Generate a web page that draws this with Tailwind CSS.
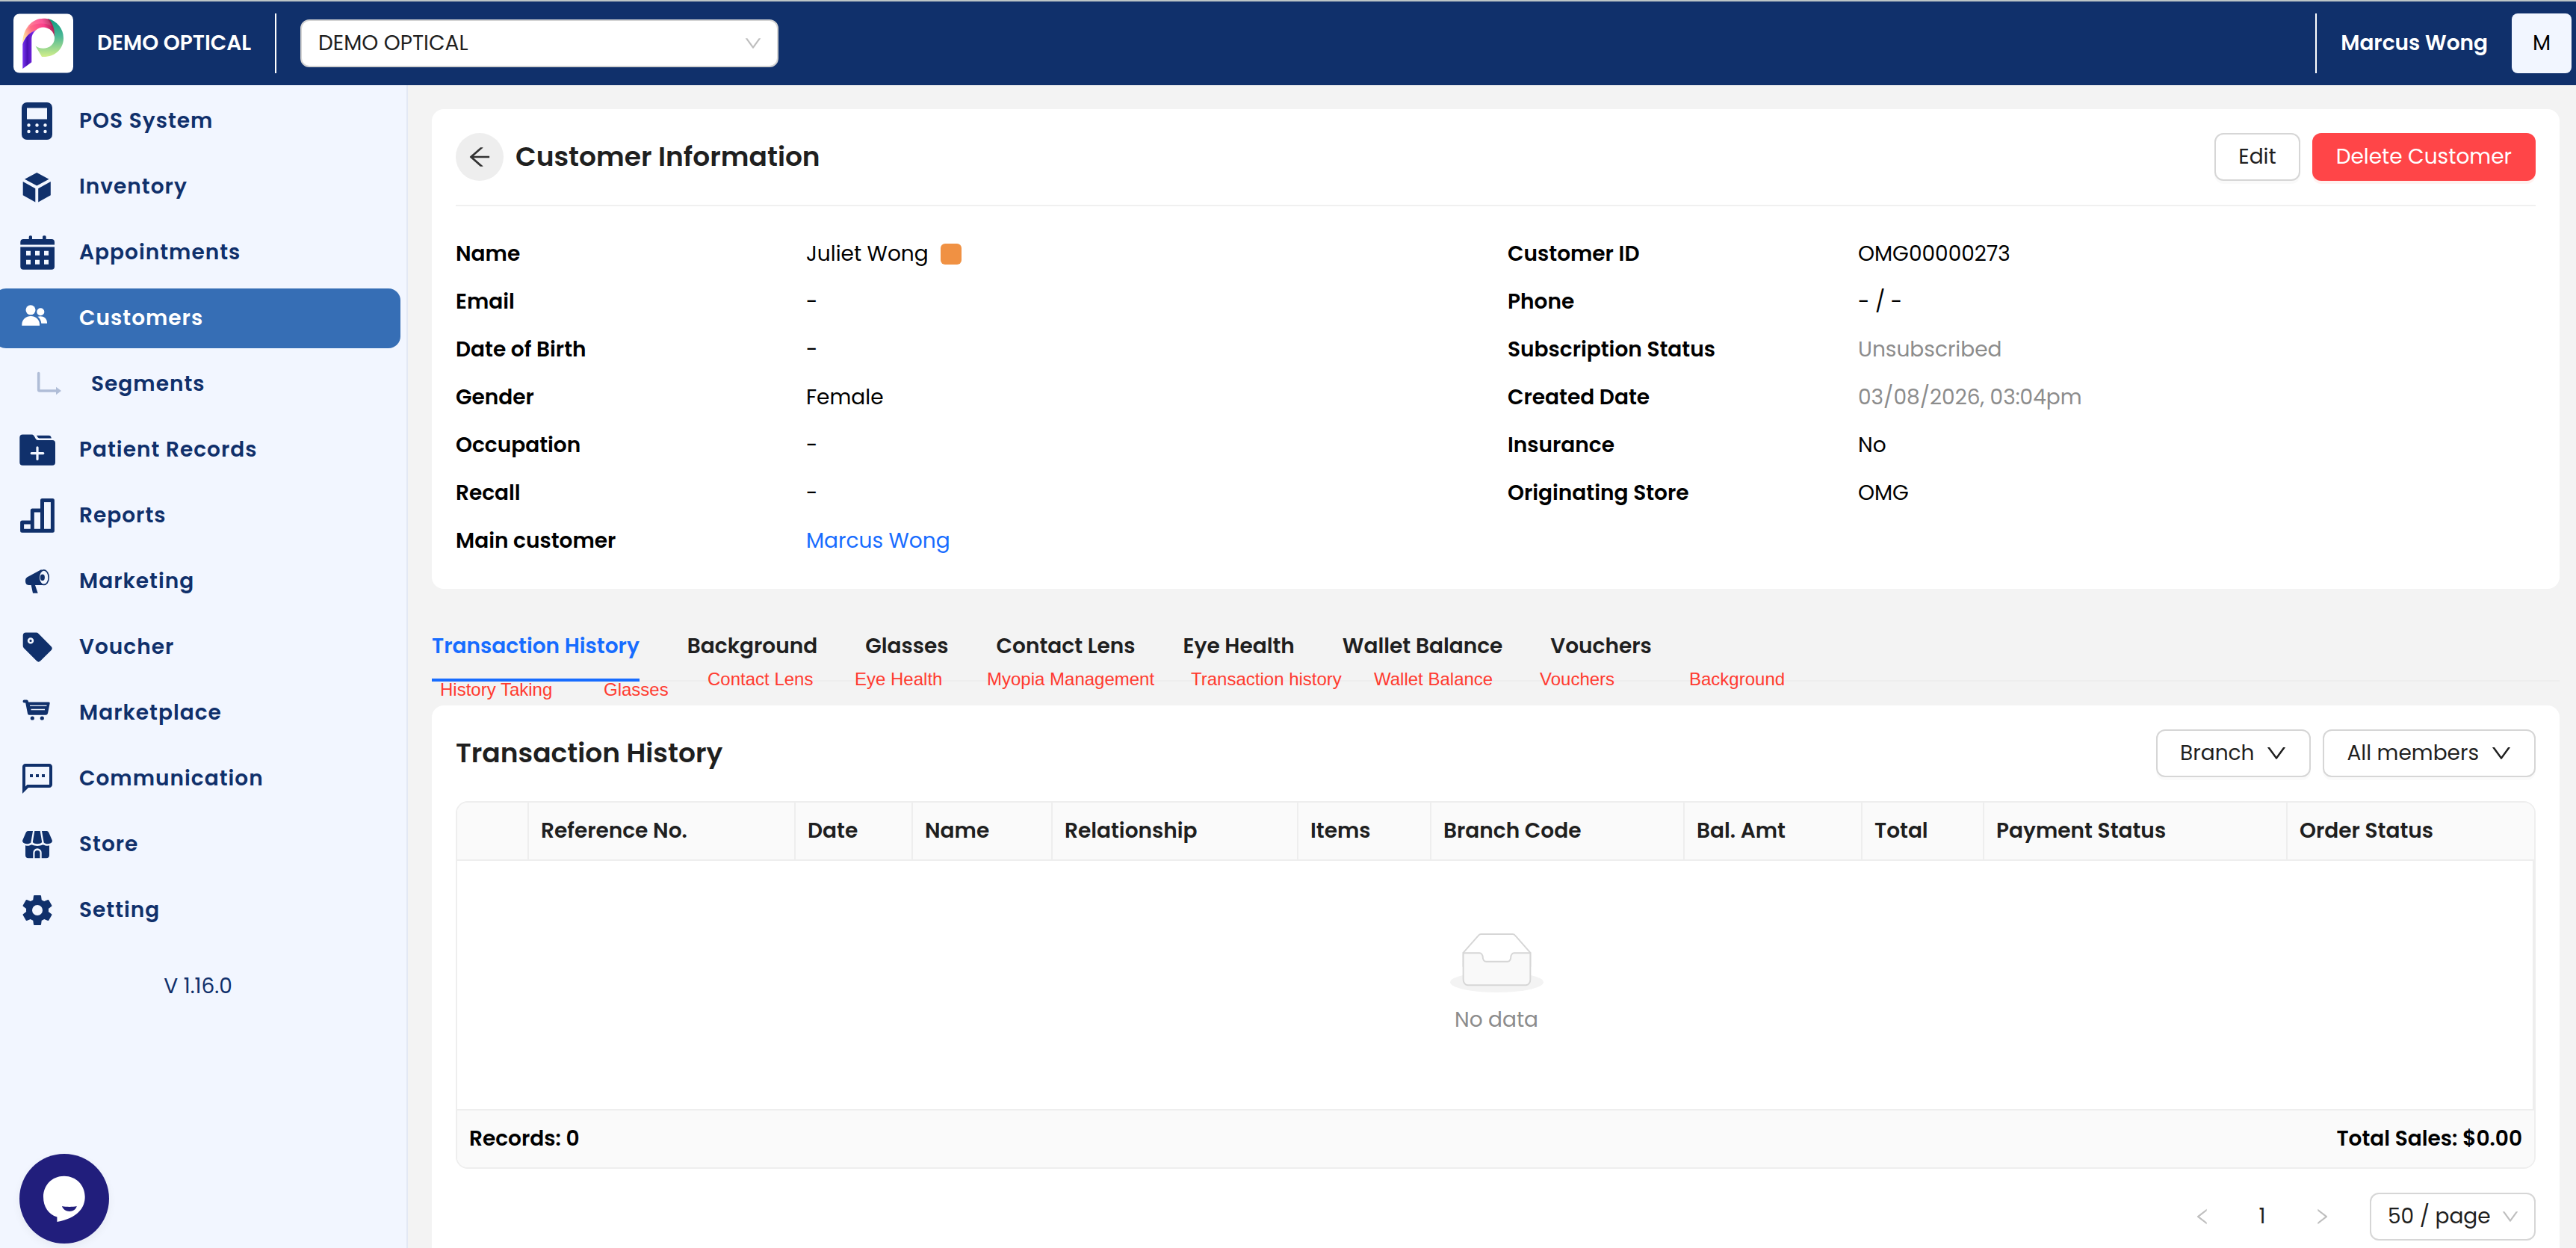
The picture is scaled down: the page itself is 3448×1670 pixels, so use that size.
<!DOCTYPE html>
<html lang="en">
<head>
<meta charset="utf-8">
<title>Customer Information</title>
<script src="https://cdn.jsdelivr.net/npm/@tailwindcss/browser@4"></script>
</head>
<body class="h-[1670px] w-[3448px] overflow-hidden bg-[#f3f3f3] font-[Poppins,Inter,sans-serif] text-[28px] leading-[44px] text-black">

<svg class="hidden">
  <symbol id="down" viewBox="64 64 896 896"><path d="M884 256h-75c-5.1 0-9.9 2.5-12.9 6.6L512 654.2 227.9 262.6c-3-4.1-7.8-6.6-12.9-6.6h-75c-6.5 0-10.3 7.4-6.5 12.7l352.6 486.1c12.8 17.6 39 17.6 51.7 0l352.6-486.1c3.9-5.3.1-12.7-6.4-12.7z"/></symbol>
</svg>

<!-- Top bar -->
<header class="flex h-[114px] items-center border-t-2 border-[#bcc5c6] bg-[#10306b] pr-1.5 pl-[18px]">
  <svg class="h-20 w-20" viewBox="0 0 80 80">
    <defs>
      <linearGradient id="lg1" x1="0" y1="0" x2="0" y2="1"><stop offset="0" stop-color="#0d9a80"/><stop offset=".45" stop-color="#4bb795"/><stop offset="1" stop-color="#d3ef8b"/></linearGradient>
      <linearGradient id="lg2" x1="0" y1=".6" x2="1" y2=".3"><stop offset="0" stop-color="#ffe09a"/><stop offset=".3" stop-color="#ff6a86"/><stop offset=".7" stop-color="#fb3f8c"/><stop offset="1" stop-color="#9c1848"/></linearGradient>
      <linearGradient id="lg3" x1="0" y1="0" x2="1" y2="0"><stop offset="0" stop-color="#7a35f0"/><stop offset=".35" stop-color="#4a10b4"/><stop offset="1" stop-color="#8f35ff"/></linearGradient>
    </defs>
    <rect width="80" height="79" y=".5" rx="8" fill="#fff"/>
    <path d="M46 7A27 27 0 0 1 67 33C67 48 55 59 38 58L29.500 43.500C40 51 55 45 55 33C55 24 51 15 46 7z" fill="url(#lg1)"/>
    <path d="M12.300 41C12 20 25 6.700 40 6.700C43 6.700 46 7 48 8C53 14 55.500 22 54.800 31A15 15 0 0 0 30 22.500C20 27 14 33 12.300 41z" fill="url(#lg2)"/>
    <path d="M13 26C20 14 38 10 51 17C48 10 46 8 44 7C30 4 17 14 13 26z" fill="#fff" opacity=".12"/>
    <path d="M12.300 41C15 32 22 25 30 22.500C26 26 24.300 30 24.300 34V65.300L12.300 74z" fill="url(#lg3)"/>
  </svg>
  <span class="ml-8 w-[206px] font-semibold whitespace-nowrap text-white">DEMO OPTICAL</span>
  <div class="ml-8 h-20 w-0.5 bg-white"></div>
  <div class="ml-8 flex h-16 w-[640px] items-center justify-between rounded-xl border-2 border-[#d3d3d3] bg-white pr-[20px] pl-[22px] text-[#1f1f1f]">
    DEMO OPTICAL
    <svg class="h-6 w-6 fill-[#bfbfbf]"><use href="#down"/></svg>
  </div>
  <div class="ml-auto h-20 w-0.5 bg-white"></div>
  <span class="ml-8 font-semibold text-white">Marcus Wong</span>
  <div class="ml-8 flex h-20 w-20 items-center justify-center rounded-lg bg-[#f2f6ff]">M</div>
</header>

<div class="flex h-[1556px]">
  <!-- Sidebar -->
  <aside class="relative w-[546px] shrink-0 border-r-2 border-[#e3e8f4] bg-[#f2f6ff] pt-2 text-[#10306b]">
    <nav class="flex flex-col gap-2 font-semibold tracking-[1px]">
      <a class="flex h-20 items-center gap-8 pl-[26px]">
        <svg class="h-12 w-12 overflow-visible fill-current" viewBox="0 0 48 48"><rect x="3" y="-1" width="41" height="50" rx="7"/><path fill="#f2f6ff" d="M10 6.500h27v15H10z"/><g fill="#f2f6ff"><circle cx="12.500" cy="29.500" r="2.200"/><circle cx="23.500" cy="29.500" r="2.200"/><circle cx="34.500" cy="29.500" r="2.200"/><circle cx="12.500" cy="38" r="2.200"/><circle cx="23.500" cy="38" r="2.200"/><circle cx="34.500" cy="38" r="2.200"/></g></svg>
        POS System</a>
      <a class="flex h-20 items-center gap-8 pl-[26px]">
        <svg class="h-12 w-12 fill-current" viewBox="0 0 48 48"><path d="M23.300 4.900L39.500 13.800L23.300 22.400L7 13.800zM4.700 16.900L21.300 26.300V44.500L4.700 35.200zM25.200 26.300L41.800 16.900V35.200L25.200 44.500z"/></svg>
        Inventory</a>
      <a class="flex h-20 items-center gap-8 pl-[26px]">
        <svg class="h-12 w-12 fill-current" viewBox="0 0 48 48"><path d="M1.300 13.600V10a4 4 0 0 1 4-4H12.700V3a1.700 1.700 0 0 1 1.700-1.700h1A1.700 1.700 0 0 1 17 3V6H31V3a1.700 1.700 0 0 1 1.700-1.700h1.300A1.700 1.700 0 0 1 35.700 3V6H43a4 4 0 0 1 4 4v3.600z"/><path fill-rule="evenodd" d="M1.300 16.400H47V42.700a4 4 0 0 1-4 4H5.300a4 4 0 0 1-4-4zM9 21.700v6h6v-6zM21 21.700v6h6v-6zM33 21.700v6h6v-6zM9 33.700v6h6v-6zM21 33.700v6h6v-6zM33 33.700v6h6v-6z"/></svg>
        Appointments</a>
      <a class="-ml-2 flex h-20 w-[544px] items-center gap-8 rounded-2xl bg-[#366eb5] pl-[34px] text-white">
        <svg class="h-12 w-12 fill-current" viewBox="0 0 48 48"><circle cx="15" cy="12.800" r="6.500"/><path d="M3.300 33.800V32C3.300 25.500 9 21 15.200 21S27 25.500 27 32v1.800z"/><circle cx="28.300" cy="15.200" r="5"/><path d="M24.500 21.700C31 19.700 37 23.500 37 29.500v1.200H29.300C29 27 27.300 24 24.500 21.700z"/></svg>
        Customers</a>
      <a class="flex h-20 items-center gap-12 pl-[26px]">
        <svg class="h-12 w-12 overflow-visible" viewBox="0 0 48 48"><path d="M25.700 9.500V31.500a1.500 1.500 0 0 0 1.500 1.500H50" fill="none" stroke="#b0bdd7" stroke-width="3.600" stroke-linecap="round"/><path fill="#b0bdd7" d="M49 27.700L56 33L49 38.300z"/></svg>
        Segments</a>
      <a class="flex h-20 items-center gap-8 pl-[26px]">
        <svg class="h-12 w-12 fill-current" viewBox="0 0 48 48"><path d="M4.300 3.400H16.500C21 3.400 20.500 11 25 11H44a4 4 0 0 1 4 4V40.800a4 4 0 0 1-4 4H4.300a4 4 0 0 1-4-4V7.400a4 4 0 0 1 4-4zM23 4.800H39.500C41.500 4.800 42.500 6.500 42.800 8.500H26.500C25 8.500 24 6.500 23 4.800z"/><path d="M24 20.800V36.400M16.200 28.600H31.800" stroke="#f2f6ff" stroke-width="3.200" stroke-linecap="round"/></svg>
        Patient Records</a>
      <a class="flex h-20 items-center gap-8 pl-[26px]">
        <svg class="h-12 w-12" viewBox="0 0 48 48" fill="none" stroke="currentColor" stroke-width="5" stroke-linejoin="round"><path d="M3.600 33H17.300V44.200H3.600zM17.300 44.200V16.900H30.500V44.200zM30.500 3.600H44.400V44.200H30.500z"/></svg>
        Reports</a>
      <a class="flex h-20 items-center gap-8 pl-[26px]">
        <svg class="h-12 w-12 fill-current" viewBox="0 0 48 48"><path d="M29.500 8L10.500 18.200C8.700 19.200 8 21 8 23.300C8 27 9.800 29 12.500 29H15.700L18 39.700H24.700L21 29H34z"/><ellipse cx="32.700" cy="18.700" rx="7.300" ry="10.600"/><ellipse cx="32.700" cy="18.700" rx="5.700" ry="8.900" fill="#f2f6ff"/><ellipse cx="30.900" cy="18.700" rx="3" ry="4.200"/></svg>
        Marketing</a>
      <a class="flex h-20 items-center gap-8 pl-[26px]">
        <svg class="h-12 w-12 fill-current" viewBox="0 0 48 48"><path d="M8.700 4.600H22.500a4 4 0 0 1 2.900 1.200L42.700 23.300a3.600 3.600 0 0 1 0 4.800L28 42.500a3.500 3.500 0 0 1-4.800 0L5.900 25.200a4 4 0 0 1-1.200-2.900V8.600a4 4 0 0 1 4-4z"/><circle cx="15" cy="15.400" r="2.900" fill="none" stroke="#f2f6ff" stroke-width="2.600"/></svg>
        Voucher</a>
      <a class="flex h-20 items-center gap-8 pl-[26px]">
        <svg class="h-12 w-12 fill-current" viewBox="0 0 48 48"><path d="M6.500 8.400H9.800L13 24.500" fill="none" stroke="currentColor" stroke-width="4" stroke-linecap="round" stroke-linejoin="round"/><path d="M11.500 9.600H39.500a1.300 1.300 0 0 1 1.200 1.500L38 24.500a3 3 0 0 1-3 2.300H14.300a3 3 0 0 1-3-2.300z"/><circle cx="17.300" cy="31" r="2.600"/><circle cx="30.300" cy="31" r="2.600"/><path d="M14 14.300H36.500M15.500 19.500H34" stroke="#f2f6ff" stroke-width="1.300"/></svg>
        Marketplace</a>
      <a class="flex h-20 items-center gap-8 pl-[26px]">
        <svg class="h-12 w-12 fill-current" viewBox="0 0 24 24"><path d="M20 2H4c-1.100 0-2 .9-2 2v18l4-4h14c1.100 0 2-.9 2-2V4c0-1.100-.9-2-2-2zm0 14H5.200L4 17.200V4h16v12z"/><path d="M7 9h2v2H7zM11 9h2v2h-2zM15 9h2v2h-2z"/></svg>
        Communication</a>
      <a class="flex h-20 items-center gap-8 pl-[26px]">
        <svg class="h-12 w-12 fill-current" viewBox="0 0 48 48"><path d="M11.500 6H18L15.300 21.500C13 24 6 24 4.300 20.500C3.800 19.500 4.200 18.500 4.500 17.800L8.500 8.500C9.200 7 10 6 11.500 6zM20.300 6H27.700L30.200 21C28 24 20 24 17.800 21zM30 6H36.500C38 6 38.800 7 39.500 8.500L43.500 17.800C43.800 18.500 44.200 19.500 43.700 20.500C42 24 35 24 32.700 21.500z"/><path fill-rule="evenodd" d="M8 25.300C11 26.300 14 25.700 16.500 24.300C21 26.500 27 26.500 31.500 24.300C34 25.700 37 26.300 40 25.300V38.200a4 4 0 0 1-4 4H12a4 4 0 0 1-4-4zM18.300 42.200V35a5.700 5.700 0 0 1 11.400 0V42.200z"/><path d="M20.500 42.200V35.500a3.500 3.500 0 0 1 7 0V42.200z"/></svg>
        Store</a>
      <a class="flex h-20 items-center gap-8 pl-[26px]">
        <svg class="h-12 w-12 fill-current" viewBox="0 0 24 24"><path d="M12,15.500A3.500,3.500 0 0,1 8.500,12A3.500,3.500 0 0,1 12,8.500A3.500,3.500 0 0,1 15.500,12A3.500,3.500 0 0,1 12,15.500M19.430,12.970C19.470,12.650 19.500,12.330 19.500,12C19.500,11.670 19.470,11.340 19.430,11L21.540,9.370C21.730,9.220 21.780,8.950 21.660,8.730L19.660,5.270C19.540,5.050 19.270,4.960 19.050,5.050L16.560,6.050C16.040,5.660 15.500,5.320 14.870,5.070L14.500,2.420C14.460,2.180 14.250,2 14,2H10C9.750,2 9.540,2.180 9.500,2.420L9.130,5.070C8.500,5.320 7.960,5.660 7.440,6.050L4.950,5.050C4.730,4.960 4.460,5.050 4.340,5.270L2.340,8.730C2.210,8.950 2.270,9.220 2.460,9.370L4.570,11C4.530,11.340 4.500,11.670 4.500,12C4.500,12.330 4.530,12.650 4.570,12.970L2.460,14.630C2.270,14.780 2.210,15.050 2.340,15.270L4.340,18.730C4.460,18.950 4.730,19.030 4.950,18.950L7.440,17.940C7.960,18.340 8.500,18.680 9.130,18.930L9.500,21.580C9.540,21.820 9.750,22 10,22H14C14.250,22 14.460,21.820 14.500,21.580L14.870,18.930C15.500,18.670 16.040,18.340 16.560,17.940L19.050,18.950C19.270,19.030 19.540,18.950 19.660,18.730L21.660,15.270C21.780,15.050 21.730,14.780 21.540,14.630L19.430,12.970Z"/></svg>
        Setting</a>
    </nav>
    <p class="mt-10 pr-3.5 text-center">V 1.16.0</p>
    <!-- Chat launcher -->
    <div class="absolute top-[1430px] left-[26px] h-[120px] w-[120px] rounded-full bg-[#211e7c] shadow-[0_4px_12px_rgba(0,0,0,0.05)]">
      <svg class="h-[120px] w-[120px]" viewBox="0 0 120 120"><path fill="#fff" d="M59.800 29.700C76 29.700 87.700 42 87.700 57.500C87.700 72 78 86 50.400 91V84.500C39 81 32 71 32 57.500C32 42 43.500 29.700 59.800 29.700z"/><path fill="#211e7c" d="M57 70C63 71.200 71 71.200 76.800 70C74.500 79 60 79.500 57 70z"/></svg>
    </div>
  </aside>

  <main class="flex min-w-0 flex-1 flex-col px-8 pt-8 pr-[22px]">
    <!-- Customer card -->
    <section class="rounded-2xl bg-white p-8">
      <div class="flex items-center border-b-2 border-[#f0f0f0] pb-8">
        <div class="flex h-16 w-16 items-center justify-center rounded-full bg-[#eeeeee]">
          <svg class="h-8 w-8 fill-[#333]" viewBox="64 64 896 896"><path d="M872 474H286.900l350.200-304c5.600-4.900 2.200-14-5.200-14h-88.500c-3.900 0-7.600 1.400-10.500 3.900L155 487.800a31.960 31.960 0 000 48.300L535.100 866c1.500 1.300 3.300 2 5.200 2h91.500c7.400 0 10.800-9.200 5.200-14L286.900 550H872c4.400 0 8-3.600 8-8v-60c0-4.400-3.600-8-8-8z"/></svg>
        </div>
        <h1 class="ml-4 text-[36px] font-semibold text-[#1f1f1f]">Customer Information</h1>
        <button class="ml-auto h-16 rounded-xl border-2 border-[#d6d6d6] bg-white px-[30px] text-[#1f1f1f] shadow-[0_4px_0_rgba(0,0,0,0.02)]">Edit</button>
        <button class="ml-4 h-16 rounded-xl bg-[#ff4548] px-8 text-white shadow-[0_4px_0_rgba(255,38,5,0.06)]">Delete Customer</button>
      </div>
      <div class="mt-8 grid auto-rows-[64px] grid-cols-[469px_939px_469px_1fr] items-center">
        <b class="font-semibold">Name</b><div class="flex items-center gap-4">Juliet Wong<i class="h-7 w-7 rounded-md bg-[#f09143]"></i></div>
        <b class="font-semibold">Customer ID</b><div>OMG00000273</div>
        <b class="font-semibold">Email</b><div>-</div>
        <b class="font-semibold">Phone</b><div>- / -</div>
        <b class="font-semibold">Date of Birth</b><div>-</div>
        <b class="font-semibold">Subscription Status</b><div class="text-[#8c8c8c]">Unsubscribed</div>
        <b class="font-semibold">Gender</b><div>Female</div>
        <b class="font-semibold">Created Date</b><div class="text-[#8c8c8c]">03/08/2026, 03:04pm</div>
        <b class="font-semibold">Occupation</b><div>-</div>
        <b class="font-semibold">Insurance</b><div>No</div>
        <b class="font-semibold">Recall</b><div>-</div>
        <b class="font-semibold">Originating Store</b><div>OMG</div>
        <b class="font-semibold">Main customer</b><div class="text-[#176cff]">Marcus Wong</div>
      </div>
    </section>

    <!-- Tabs -->
    <div class="relative mt-8 flex h-[92px] gap-16 border-b-2 border-[#eeeeee] font-semibold text-[#1f1f1f]">
      <div class="h-[92px] border-b-4 border-[#176cff] pt-[23px] text-[#176cff]">Transaction History</div>
      <div class="pt-[23px]">Background</div>
      <div class="pt-[23px]">Glasses</div>
      <div class="pt-[23px]">Contact Lens</div>
      <div class="pt-[23px]">Eye Health</div>
      <div class="pt-[23px]">Wallet Balance</div>
      <div class="pt-[23px]">Vouchers</div>
      <!-- Red notes laid over the tab bar -->
      <div class="absolute inset-0 font-['Liberation_Sans',Arial,sans-serif] text-[24px] leading-7 font-normal whitespace-nowrap text-[#ff3b30]">
        <span class="absolute top-[89px] left-[11px]">History Taking</span>
        <span class="absolute top-[89px] left-[230px]">Glasses</span>
        <span class="absolute top-[75px] left-[369px]">Contact Lens</span>
        <span class="absolute top-[75px] left-[566px]">Eye Health</span>
        <span class="absolute top-[75px] left-[743px]">Myopia Management</span>
        <span class="absolute top-[75px] left-[1016px]">Transaction history</span>
        <span class="absolute top-[75px] left-[1261px]">Wallet Balance</span>
        <span class="absolute top-[75px] left-[1483px]">Vouchers</span>
        <span class="absolute top-[75px] left-[1683px]">Background</span>
      </div>
    </div>

    <!-- Transactions card -->
    <section class="mt-8 flex-1 rounded-t-2xl bg-white px-8 pt-8">
      <div class="flex items-center gap-4 text-[#1f1f1f]">
        <h2 class="mr-auto text-[36px] font-semibold">Transaction History</h2>
        <button class="flex h-16 items-center gap-4 rounded-xl border-2 border-[#d6d6d6] px-[30px] shadow-[0_4px_0_rgba(0,0,0,0.02)]">Branch<svg class="h-7 w-7 fill-current"><use href="#down"/></svg></button>
        <button class="flex h-16 items-center gap-4 rounded-xl border-2 border-[#d6d6d6] px-[30px] shadow-[0_4px_0_rgba(0,0,0,0.02)]">All members<svg class="h-7 w-7 fill-current"><use href="#down"/></svg></button>
      </div>
      <div class="mt-8 h-[492px] overflow-hidden rounded-2xl border-2 border-[#eeeeee]">
        <div class="grid h-[78px] grid-cols-[96px_357px_157px_187px_329px_178px_339px_238px_163px_406px_1fr] border-b-2 border-[#eeeeee] bg-[#fafafa] leading-[76px] font-semibold text-[#1f1f1f]">
          <div class="border-r-2 border-[#eeeeee]"></div>
          <div class="border-r-2 border-[#eeeeee] pl-4">Reference No.</div>
          <div class="border-r-2 border-[#eeeeee] pl-4">Date</div>
          <div class="border-r-2 border-[#eeeeee] pl-4">Name</div>
          <div class="border-r-2 border-[#eeeeee] pl-4">Relationship</div>
          <div class="border-r-2 border-[#eeeeee] pl-4">Items</div>
          <div class="border-r-2 border-[#eeeeee] pl-4">Branch Code</div>
          <div class="border-r-2 border-[#eeeeee] pl-4">Bal. Amt</div>
          <div class="border-r-2 border-[#eeeeee] pl-4">Total</div>
          <div class="border-r-2 border-[#eeeeee] pl-4">Payment Status</div>
          <div class="pl-4">Order Status</div>
        </div>
        <div class="flex h-[334px] flex-col items-center border-r-2 border-b-2 border-[#eeeeee] pt-24 pl-1 text-[#8c8c8c]">
          <svg class="h-20 w-[125px]" viewBox="0 0 64 41"><g transform="translate(0 1)" fill="none"><ellipse fill="#f3f3f3" cx="32" cy="33" rx="32" ry="7"/><g stroke="#d6d6d6"><path fill="#fff" d="M55 12.760L44.854 1.258C44.367.474 43.656 0 42.907 0H21.093c-.749 0-1.460.474-1.947 1.257L9 12.761V22h46v-9.240z"/><path d="M41.613 15.931c0-1.605.994-2.930 2.227-2.931H55v18.137C55 33.260 53.680 35 52.050 35h-40.100C10.320 35 9 33.259 9 31.137V13h11.160c1.233 0 2.227 1.323 2.227 2.928v.022c0 1.605 1.005 2.901 2.237 2.901h14.752c1.232 0 2.237-1.308 2.237-2.913v-.007z" fill="#f9f9f9"/></g></g></svg>
          <p class="mt-[15px]">No data</p>
        </div>
        <div class="flex h-[76px] items-center justify-between bg-[#fafafa] px-4 font-semibold">
          <span>Records: 0</span><span>Total Sales: $0.00</span>
        </div>
      </div>
      <div class="mt-8 flex h-16 items-center justify-end text-[#1f1f1f]">
        <svg class="h-6 w-6 fill-[#bfbfbf]" viewBox="64 64 896 896"><path d="M724 218.300V141c0-6.700-7.700-10.400-12.900-6.300L260.300 486.800a31.860 31.860 0 000 50.300l450.800 352.100c5.300 4.100 12.900.4 12.900-6.300v-77.300c0-4.900-2.300-9.600-6.100-12.600l-360-281 360-281.100c3.800-3 6.100-7.700 6.100-12.600z"/></svg>
        <span class="mx-9 w-16 text-center">1</span>
        <svg class="mr-[52px] h-6 w-6 fill-[#bfbfbf]" viewBox="64 64 896 896"><path d="M765.700 486.800L314.900 134.700A7.970 7.970 0 00302 141v77.300c0 4.900 2.300 9.600 6.100 12.600l360 281.100-360 281.100c-3.900 3-6.100 7.700-6.100 12.600V883c0 6.700 7.700 10.400 12.900 6.300l450.800-352.100a31.960 31.960 0 000-50.400z"/></svg>
        <div class="flex h-16 w-[222px] items-center justify-between rounded-xl border-2 border-[#d6d6d6] pr-5 pl-[22px]">50 / page<svg class="h-6 w-6 fill-[#bfbfbf]"><use href="#down"/></svg></div>
      </div>
    </section>
  </main>
</div>
</body>
</html>
